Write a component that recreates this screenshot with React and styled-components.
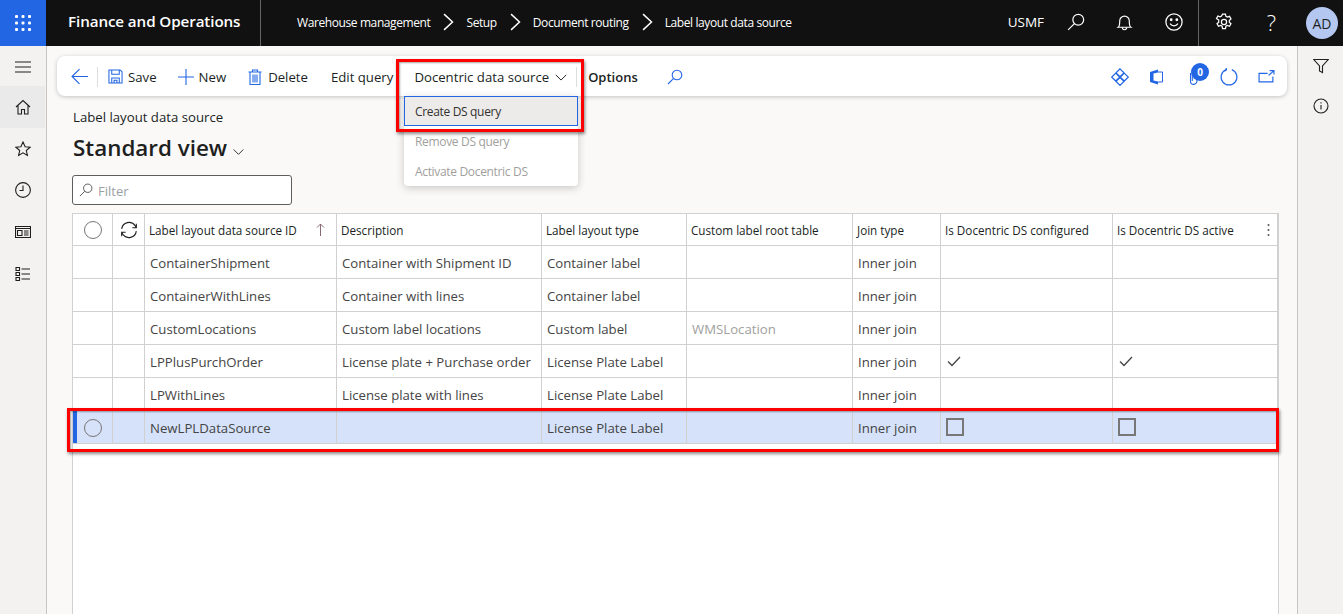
import React from 'react'
import styled, { createGlobalStyle } from 'styled-components'

const BLUE = '#2266e3'
const FONT = '"Open Sans", "Noto Sans", Arial, sans-serif'

const COLUMNS = [
	{ key: 'id', label: 'Label layout data source ID' },
	{ key: 'description', label: 'Description' },
	{ key: 'type', label: 'Label layout type' },
	{ key: 'root', label: 'Custom label root table' },
	{ key: 'join', label: 'Join type' },
	{ key: 'configured', label: 'Is Docentric DS configured' },
	{ key: 'active', label: 'Is Docentric DS active' },
]

const ROWS = [
	{ id: 'ContainerShipment', description: 'Container with Shipment ID', type: 'Container label', join: 'Inner join' },
	{ id: 'ContainerWithLines', description: 'Container with lines', type: 'Container label', join: 'Inner join' },
	{ id: 'CustomLocations', description: 'Custom label locations', type: 'Custom label', root: 'WMSLocation', join: 'Inner join' },
	{ id: 'LPPlusPurchOrder', description: 'License plate + Purchase order', type: 'License Plate Label', join: 'Inner join', configured: true, active: true },
	{ id: 'LPWithLines', description: 'License plate with lines', type: 'License Plate Label', join: 'Inner join' },
	{ id: 'NewLPLDataSource', description: '', type: 'License Plate Label', join: 'Inner join', selected: true },
]

const Svg = ({ size = 16, children, color = 'currentColor', width = 1.1 }) => (
	<svg width={size} height={size} viewBox="0 0 16 16" fill="none" stroke={color} strokeWidth={width} style={{ display: 'block', flex: 'none' }}>
		{children}
	</svg>
)

const SearchIcon = props => (
	<Svg {...props}>
		<circle cx="10" cy="6" r="4.8" />
		<path d="M6.6 9.4 1 15" />
	</Svg>
)
const ChevronDown = props => (
	<Svg {...props}>
		<path d="M2 5.5l6 6 6-6" />
	</Svg>
)
const ChevronRight = () => (
	<Svg size={18} width={1.3}>
		<path d="M4.5 1l7.5 7-7.5 7" />
	</Svg>
)
const BellIcon = () => (
	<Svg size={17}>
		<path d="M2 12.5c1.500-1 1.500-3 1.500-6a4.500 4.500 0 0 1 9 0c0 3 0 5 1.500 6z" />
		<path d="M6 12.800a2 2 0 0 0 4 0" />
	</Svg>
)
const SmileIcon = () => (
	<Svg size={18}>
		<circle cx="8" cy="8" r="7.200" />
		<circle cx="5.500" cy="6" r=".7" fill="currentColor" />
		<circle cx="10.500" cy="6" r=".7" fill="currentColor" />
		<path d="M4.500 9.500c1.800 2.600 5.200 2.600 7 0" />
	</Svg>
)
const GearIcon = () => (
	<Svg size={18}>
		<circle cx="8" cy="8" r="2.300" />
		<path d="M6.700 1h2.600l.4 2 1.300.7 1.900-.7 1.300 2.300-1.500 1.300v1.600l1.500 1.300-1.300 2.300-1.900-.7-1.300.7-.4 2H6.700l-.4-2-1.300-.7-1.900.7-1.300-2.300 1.500-1.300V6.300L1.300 5l1.300-2.300 1.900.7 1.300-.7z" />
	</Svg>
)
const WaffleIcon = () => (
	<svg width="16" height="16" viewBox="0 0 16 16" fill="#fff" style={{ display: 'block' }}>
		{[1.500, 8, 14.500].map(y =>
			[1.500, 8, 14.500].map(x => <rect key={`${x}-${y}`} x={x - 1.500} y={y - 1.500} width="3" height="3" rx="1" />)
		)}
	</svg>
)
const BackIcon = () => (
	<Svg size={17} color={BLUE}>
		<path d="M16 8H1M8 1 1 8l7 7" />
	</Svg>
)
const SaveIcon = () => (
	<Svg size={15} color={BLUE}>
		<path d="M1 1h12l2 2v12H1z" />
		<path d="M4 1v4.500h8V1M4 15V9.500h8V15M6.500 15v-3h3v3" />
	</Svg>
)
const PlusIcon = () => (
	<Svg color={BLUE}>
		<path d="M8 0v16M0 8h16" />
	</Svg>
)
const TrashIcon = () => (
	<Svg color={BLUE}>
		<path d="M1.500 3h13M5.500 3V1h5v2M3 3v12.500h10V3M6 5.500v8M8 5.500v8M10 5.500v8" />
	</Svg>
)
const DiamondIcon = () => (
	<Svg size={18} color={BLUE}>
		<path d="M8 .8 11.500 4.300 8 7.800 4.500 4.300zM4.200 4.600 7.700 8.100 4.200 11.600.7 8.100zM11.800 4.600 15.300 8.100 11.800 11.600 8.300 8.100zM8 8.400 11.500 11.900 8 15.400 4.500 11.900z" />
	</Svg>
)
const OfficeIcon = () => (
	<svg width="15" height="16" viewBox="0 0 15 16" style={{ display: 'block', flex: 'none' }}>
		<path d="M9 .5 1 3v10l8 2.500z" fill={BLUE} />
		<path d="M9 3h4.500v10H9" fill="none" stroke={BLUE} />
		<path d="M4.500 4.500 9 3.500v9l-4.500-1z" fill="#fff" />
	</svg>
)
const ClipIcon = () => (
	<Svg color={BLUE}>
		<path d="M6.500 4v8.200a3.200 3.200 0 0 0 6.400 0V3a2.300 2.300 0 0 0-4.600 0v9" />
	</Svg>
)
const RefreshIcon = () => (
	<Svg size={18} color={BLUE}>
		<path d="M5.500 1.500A7 7 0 1 0 10.500 1.500" />
		<path d="M5.500 0l.2 1.600L4 2.800" />
	</Svg>
)
const PopoutIcon = () => (
	<Svg size={17} color={BLUE}>
		<path d="M9 5H1v8h13V8M10 7l5-4.500M11 2.500h4V6" />
	</Svg>
)
const HamburgerIcon = () => (
	<Svg size={16}>
		<path d="M0 3h16M0 8h16M0 13h16" />
	</Svg>
)
const HomeIcon = () => (
	<Svg>
		<path d="M1 8l7-6.500L15 8M3 6.500V15h3.500v-4.500h3V15H13V6.500" />
	</Svg>
)
const StarIcon = () => (
	<Svg>
		<path d="M8 1l2.100 4.700 5 .5-3.800 3.300 1.100 5L8 11.900l-4.400 2.600 1.100-5L.9 6.200l5-.5z" />
	</Svg>
)
const ClockIcon = () => (
	<Svg>
		<circle cx="8" cy="8" r="7.400" />
		<path d="M8 3.500V8.500H4.500" />
	</Svg>
)
const WorkspaceIcon = () => (
	<Svg>
		<path d="M.5 2.500h15v11H.5zM.5 4.500h15M2.500 6.500h4.500v5H2.500zM9 7h4.500M9 9h4.500M9 11h4.500" />
	</Svg>
)
const ListIcon = () => (
	<Svg>
		<path d="M1 1.500h3.500v3H1zM1 6.500h3.500v3H1zM1 11.500h3.500v3H1zM6.500 3h8.500M6.500 8h8.500M6.500 13h8.500" />
	</Svg>
)
const FilterIcon = () => (
	<Svg>
		<path d="M.8 1.500h14.400L9.500 8v6.500l-3-1.500V8z" />
	</Svg>
)
const InfoIcon = () => (
	<Svg>
		<circle cx="8" cy="8" r="7" />
		<path d="M8 7v4.500M8 4.300v1.200" />
	</Svg>
)
const SyncIcon = () => (
	<Svg size={18} width={1}>
		<path d="M1.500 7A6.600 6.600 0 0 1 13.500 4.200L14.500 6M14.500 2.500V6H11M14.500 9A6.600 6.600 0 0 1 2.500 11.800L1.500 10M1.500 13.500V10H5" />
	</Svg>
)
const CheckIcon = () => (
	<Svg size={16} color="#444" width={1.3}>
		<path d="M2 8.500 6 12.500 14 4" />
	</Svg>
)
const SortIcon = () => (
	<svg width="9" height="14" viewBox="0 0 9 14" fill="none" stroke="#8a6a72" style={{ display: 'block' }}>
		<path d="M4.500 13V1M1 4.500 4.500 1 8 4.500" />
	</svg>
)
const KebabIcon = () => (
	<svg width="3" height="14" viewBox="0 0 3 14" fill="#555" style={{ display: 'block' }}>
		<circle cx="1.500" cy="2" r="1" />
		<circle cx="1.500" cy="7" r="1" />
		<circle cx="1.500" cy="12" r="1" />
	</svg>
)

const GlobalStyle = createGlobalStyle`
	html, body {
		margin: 0;
		height: 100%;
		overflow: hidden;
	}
	body {
		font-family: ${FONT};
		color: #201f1e;
	}
`

const App = () => (
	<Page>
		<GlobalStyle />
		<TopBar>
			<Waffle>
				<WaffleIcon />
			</Waffle>
			<Brand>Finance and Operations</Brand>
			<Breadcrumbs>
				<Crumb>Warehouse management</Crumb>
				<ChevronRight />
				<Crumb>Setup</Crumb>
				<ChevronRight />
				<Crumb>Document routing</Crumb>
				<ChevronRight />
				<Crumb>Label layout data source</Crumb>
			</Breadcrumbs>
			<TopRight>
				<Company>USMF</Company>
				<TopIcon>
					<SearchIcon size={18} />
				</TopIcon>
				<TopIcon>
					<BellIcon />
				</TopIcon>
				<TopIcon>
					<SmileIcon />
				</TopIcon>
				<TopDivider />
				<TopIcon>
					<GearIcon />
				</TopIcon>
				<TopIcon>
					<Help>?</Help>
				</TopIcon>
				<Avatar>AD</Avatar>
			</TopRight>
		</TopBar>

		<Body>
			<LeftNav>
				<NavItem $tall={40} $pad={2}>
					<HamburgerIcon />
				</NavItem>
				<NavItem $active>
					<HomeIcon />
				</NavItem>
				<NavItem>
					<StarIcon />
				</NavItem>
				<NavItem>
					<ClockIcon />
				</NavItem>
				<NavItem>
					<WorkspaceIcon />
				</NavItem>
				<NavItem>
					<ListIcon />
				</NavItem>
			</LeftNav>

			<Main>
				<ActionBar>
					<BackButton>
						<BackIcon />
					</BackButton>
					<BarDivider $ml={9} />
					<Action $ml={10}>
						<SaveIcon />
						Save
					</Action>
					<Action $ml={21}>
						<PlusIcon />
						New
					</Action>
					<Action $ml={21}>
						<TrashIcon />
						Delete
					</Action>
					<Action $ml={23}>Edit query</Action>
					<Action $ml={21}>
						Docentric data source
						<ChevronDown size={14} />
					</Action>
					<BarDivider $ml={8} />
					<Action $ml={11} $bold>
						Options
					</Action>
					<BarSearch>
						<SearchIcon color={BLUE} />
					</BarSearch>
					<BarRight>
						<DiamondIcon />
						<OfficeIcon />
						<ClipWrap>
							<ClipIcon />
							<Badge>0</Badge>
						</ClipWrap>
						<RefreshIcon />
						<PopoutIcon />
					</BarRight>
				</ActionBar>

				<Caption>Label layout data source</Caption>
				<ViewTitle>
					Standard view
					<ChevronDown size={13} />
				</ViewTitle>
				<FilterBox>
					<SearchIcon size={14} color="#555" />
					<FilterText>Filter</FilterText>
				</FilterBox>

				<Grid>
					<HeadCell $center>
						<Radio />
					</HeadCell>
					<HeadCell $center>
						<SyncIcon />
					</HeadCell>
					{COLUMNS.map(col => (
						<HeadCell key={col.key}>
							<span>{col.label}</span>
							{col.key === 'id' && (
								<SortSlot>
									<SortIcon />
								</SortSlot>
							)}
							{col.key === 'active' && (
								<KebabSlot>
									<KebabIcon />
								</KebabSlot>
							)}
						</HeadCell>
					))}
					{ROWS.map(row => (
						<React.Fragment key={row.id}>
							<Cell $selected={row.selected} $center $marker={row.selected}>
								{row.selected && <Radio />}
							</Cell>
							<Cell $selected={row.selected} />
							{COLUMNS.map(col => {
								const isCheck = col.key === 'configured' || col.key === 'active'
								return (
									<Cell key={col.key} $selected={row.selected} $muted={col.key === 'root'}>
										{isCheck && row[col.key] && (
											<CheckSlot>
												<CheckIcon />
											</CheckSlot>
										)}
										{isCheck && row.selected && <CheckBox />}
										{!isCheck && row[col.key]}
									</Cell>
								)
							})}
						</React.Fragment>
					))}
				</Grid>
			</Main>

			<RightPane>
				<FilterIcon />
				<InfoIcon />
			</RightPane>
		</Body>

		<Menu>
			<MenuItem $focused>Create DS query</MenuItem>
			<MenuItem $disabled>Remove DS query</MenuItem>
			<MenuItem $disabled>Activate Docentric DS</MenuItem>
		</Menu>
		<MenuHighlight />
		<RowHighlight />
	</Page>
)

const Page = styled.div`
	display: flex;
	flex-direction: column;
	height: 100vh;
	overflow: hidden;
	position: relative;
`

const TopBar = styled.header`
	align-items: center;
	background: #111;
	color: #fff;
	display: flex;
	flex: none;
	height: 46px;
`

const Waffle = styled.div`
	align-items: center;
	background: ${BLUE};
	display: flex;
	height: 46px;
	justify-content: center;
	width: 46px;
`

const Brand = styled.div`
	border-right: 1px solid #666;
	box-sizing: border-box;
	font-size: 15.200px;
	font-weight: 600;
	height: 46px;
	letter-spacing: -0.1px;
	line-height: 42px;
	padding-left: 22px;
	white-space: nowrap;
	width: 215px;
`

const Breadcrumbs = styled.nav`
	align-items: center;
	display: flex;
	gap: 9px;
	padding-bottom: 2px;
	padding-left: 36px;
`

const Crumb = styled.span`
	font-size: 12px;
	letter-spacing: -0.4px;
	white-space: nowrap;
`

const TopRight = styled.div`
	align-items: center;
	display: flex;
	height: 46px;
	margin-left: auto;
`

const Company = styled.span`
	font-size: 13.500px;
	margin-right: 7px;
	padding-bottom: 2px;
`

const TopIcon = styled.div`
	align-items: center;
	box-sizing: border-box;
	display: flex;
	height: 46px;
	justify-content: center;
	padding-bottom: 2px;
	width: 49px;
`

const Help = styled.span`
	font-size: 22px;
	font-weight: 300;
	margin-right: 2px;
`

const TopDivider = styled.div`
	background: #666;
	height: 46px;
	width: 1px;
`

const Avatar = styled.div`
	align-items: center;
	background: #b4c7f0;
	border-radius: 50%;
	color: #201f1e;
	display: flex;
	font-size: 14px;
	height: 32px;
	justify-content: center;
	margin: 0 5px 0 9px;
	width: 32px;
`

const Body = styled.div`
	display: flex;
	flex: 1;
	min-height: 0;
`

const LeftNav = styled.aside`
	background: #f3f2f1;
	border-right: 1px solid #c8c6c4;
	box-sizing: border-box;
	flex: none;
	padding-right: 1px;
	width: 47px;
`

const NavItem = styled.div`
	align-items: center;
	background: ${p => (p.$active ? '#eaeaea' : 'transparent')};
	box-sizing: border-box;
	color: #201f1e;
	display: flex;
	height: ${p => p.$tall || 41.700}px;
	justify-content: center;
	padding-top: ${p => p.$pad || 0}px;
`

const Main = styled.main`
	background: #faf9f8;
	display: flex;
	flex: 1;
	flex-direction: column;
	min-width: 0;
	padding: 10px 10px 0 10px;
`

const ActionBar = styled.div`
	align-items: center;
	background: #fff;
	border-radius: 8px;
	box-shadow: 0 1px 4px rgba(0, 0, 0, 0.22);
	box-sizing: border-box;
	display: flex;
	flex: none;
	font-size: 13.200px;
	height: 40px;
	padding-top: 1px;
`

const BackButton = styled.div`
	padding-left: 14px;
`

const BarDivider = styled.div`
	background: #ddd;
	height: 20px;
	margin-left: ${p => p.$ml}px;
	width: 1px;
`

const Action = styled.div`
	align-items: center;
	display: flex;
	font-size: ${p => (p.$bold ? 13 : 13.200)}px;
	font-weight: ${p => (p.$bold ? 600 : 400)};
	gap: 5px;
	margin-left: ${p => p.$ml}px;
	white-space: nowrap;
`

const BarSearch = styled.div`
	margin-left: 29px;
`

const BarRight = styled.div`
	align-items: center;
	display: flex;
	gap: 20px;
	margin-left: auto;
	padding-right: 12px;
`

const ClipWrap = styled.div`
	position: relative;
`

const Badge = styled.span`
	align-items: center;
	background: ${BLUE};
	border-radius: 50%;
	color: #fff;
	display: flex;
	font-size: 10px;
	font-weight: 700;
	height: 18px;
	justify-content: center;
	left: 7px;
	position: absolute;
	top: -6px;
	width: 18px;
`

const Caption = styled.div`
	font-size: 13.200px;
	line-height: 18px;
	margin: 12px 0 0 16px;
`

const ViewTitle = styled.h1`
	align-items: center;
	display: flex;
	font-size: 22.400px;
	font-weight: 600;
	gap: 5px;
	line-height: 32px;
	margin: 6px 0 0 16px;

	svg {
		margin-top: 6px;
	}
`

const FilterBox = styled.div`
	align-items: center;
	background: #fff;
	border: 1px solid #605e5c;
	border-radius: 3px;
	box-sizing: border-box;
	display: flex;
	gap: 5px;
	height: 30px;
	margin: 11px 0 0 15px;
	padding-left: 6px;
	width: 220px;
`

const FilterText = styled.span`
	color: #9aa0a6;
	font-size: 13px;
	padding-top: 1px;
`

const Grid = styled.div`
	align-content: start;
	background: #fff;
	border: 1px solid #d0d0d0;
	border-bottom: none;
	display: grid;
	flex: 1;
	grid-auto-rows: 33px;
	grid-template-columns: 40px 32px 192px 205px 145px 166px 88px 172px 165px;
	grid-template-rows: 32px;
	margin: 8px 8px 0 15px;
	min-height: 0;
`

const CellBase = styled.div`
	align-items: center;
	border-bottom: 1px solid #d0d0d0;
	border-right: 1px solid #d0d0d0;
	box-sizing: border-box;
	display: flex;
	justify-content: ${p => (p.$center ? 'center' : 'flex-start')};
	min-width: 0;
	padding-top: 1px;
	white-space: nowrap;
`

const HeadCell = styled(CellBase)`
	color: #201f1e;
	font-size: 11.700px;
	font-weight: 500;
	padding-left: ${p => (p.$center ? '0' : '4px')};
	position: relative;
`

const Cell = styled(CellBase)`
	background: ${p => (p.$selected ? '#d5e2f9' : '#fff')};
	box-shadow: ${p => (p.$marker ? `inset 4px 0 0 ${BLUE}` : 'none')};
	color: ${p => (p.$muted ? '#a19f9d' : '#444')};
	font-size: 13.200px;
	padding-left: ${p => (p.$center ? '0' : '5px')};
`

const Radio = styled.span`
	border: 1px solid #777;
	border-radius: 50%;
	box-sizing: border-box;
	height: 18px;
	width: 18px;
`

const CheckBox = styled.span`
	border: 2px solid #777;
	box-sizing: border-box;
	height: 18px;
	margin-top: -2px;
	width: 18px;
`

const CheckSlot = styled.span`
	margin-top: -2px;
`

const SortSlot = styled.span`
	position: absolute;
	right: 11px;
	top: 9px;
`

const KebabSlot = styled.span`
	position: absolute;
	right: 7px;
	top: 9px;
`

const RightPane = styled.aside`
	align-items: center;
	background: #f3f2f1;
	border-left: 1px solid #c8c6c4;
	box-sizing: border-box;
	display: flex;
	flex: none;
	flex-direction: column;
	gap: 24px;
	padding-top: 12px;
	width: 46px;
`

const Menu = styled.div`
	background: #fff;
	border-radius: 0 0 4px 4px;
	box-shadow: 0 2px 8px rgba(0, 0, 0, 0.2);
	font-size: 12px;
	left: 404px;
	letter-spacing: -0.33px;
	position: absolute;
	top: 96px;
	width: 174px;
`

const MenuItem = styled.div`
	align-items: center;
	background: ${p => (p.$focused ? '#edebe9' : 'transparent')};
	border: ${p => (p.$focused ? `1px solid ${BLUE}` : '1px solid transparent')};
	box-sizing: border-box;
	color: ${p => (p.$disabled ? '#a19f9d' : '#323130')};
	display: flex;
	height: 30px;
	padding-left: 10px;
`

const Highlight = styled.div`
	border: 3px solid #f00;
	box-shadow: 1px 2px 3px rgba(0, 0, 0, 0.45), inset 1px 1px 2px rgba(0, 0, 0, 0.35);
	box-sizing: border-box;
	pointer-events: none;
	position: absolute;
`

const MenuHighlight = styled(Highlight)`
	height: 73px;
	left: 396px;
	top: 59px;
	width: 188px;
`

const RowHighlight = styled(Highlight)`
	height: 44px;
	left: 67px;
	top: 408px;
	width: 1212px;
`

export default App
